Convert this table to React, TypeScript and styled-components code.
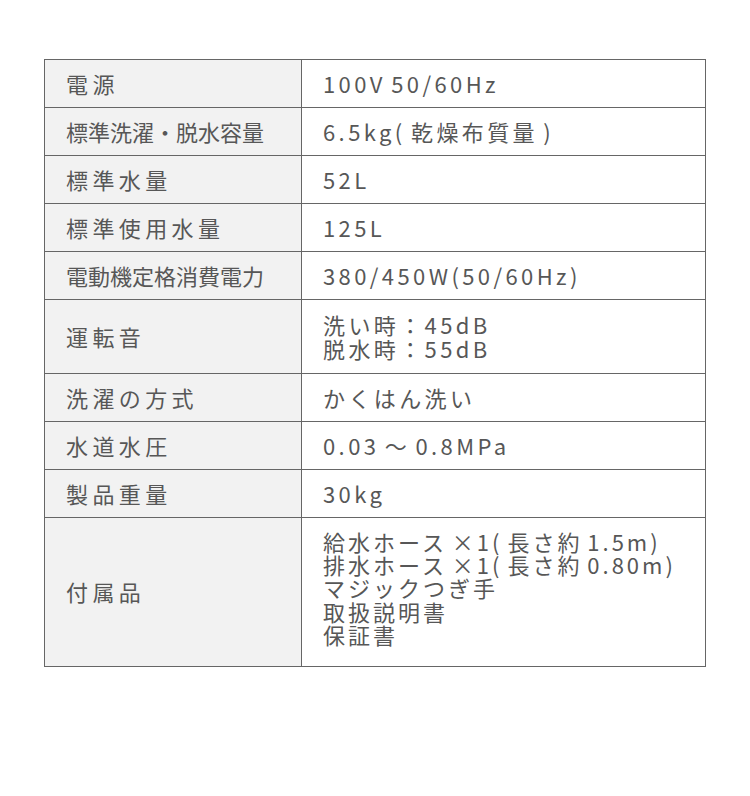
import React from "react";
import styled, { createGlobalStyle } from "styled-components";

const Global = createGlobalStyle`
  html, body { margin: 0; padding: 0; background: #fff; }
  body { font-family: "Noto Sans CJK JP", "Noto Sans", sans-serif; }
`;

const Page = styled.div`
  width: 750px;
  height: 796px;
  box-sizing: border-box;
  padding: 59px 44px 0 44px;
`;

const Table = styled.div`
  display: grid;
  grid-template-columns: 257px 1fr;
  width: 662px;
  box-sizing: border-box;
  border-top: 1px solid #666;
  border-left: 1px solid #666;
`;

const Cell = styled.div<{ $h: number }>`
  box-sizing: border-box;
  height: ${(p) => p.$h}px;
  border-right: 1px solid #666;
  border-bottom: 1px solid #666;
  display: flex;
  flex-direction: column;
  justify-content: center;
  color: #575757;
  font-size: 22px;
  font-weight: 400;
  letter-spacing: 4px;
`;

const LabelCell = styled(Cell)<{ $tight?: boolean }>`
  background: #f2f2f2;
  padding-left: 21px;
  letter-spacing: ${(p) => (p.$tight ? "0px" : "4.4px")};
`;

const ValueCell = styled(Cell)<{ $dense?: boolean }>`
  background: #fff;
  padding-left: 21px;
  padding-bottom: ${(p) => (p.$dense ? "8px" : "0")};
  letter-spacing: ${(p) => (p.$dense ? "3px" : "3.4px")};
  word-spacing: -3px;
`;

const Line = styled.div`
  line-height: 23.3px;
  white-space: nowrap;
`;

const rows: {
  label: string;
  tight?: boolean;
  dense?: boolean;
  values: string[];
  h: number;
}[] = [
  { label: "電源", values: ["100V 50/60Hz"], h: 48 },
  { label: "標準洗濯・脱水容量", tight: true, values: ["6.5kg( 乾燥布質量 )"], h: 48 },
  { label: "標準水量", values: ["52L"], h: 48 },
  { label: "標準使用水量", values: ["125L"], h: 48 },
  { label: "電動機定格消費電力", tight: true, values: ["380/450W(50/60Hz)"], h: 48 },
  { label: "運転音", values: ["洗い時：45dB", "脱水時：55dB"], h: 74 },
  { label: "洗濯の方式", values: ["かくはん洗い"], h: 48 },
  { label: "水道水圧", values: ["0.03 〜 0.8MPa"], h: 48 },
  { label: "製品重量", values: ["30kg"], h: 48 },
  {
    label: "付属品",
    dense: true,
    values: [
      "給水ホース ×1( 長さ約 1.5m)",
      "排水ホース ×1( 長さ約 0.80m)",
      "マジックつぎ手",
      "取扱説明書",
      "保証書",
    ],
    h: 149,
  },
];

export default function App() {
  return (
    <>
      <Global />
      <Page>
        <Table>
          {rows.map((r) => (
            <React.Fragment key={r.label}>
              <LabelCell $h={r.h} $tight={r.tight}>
                <Line>{r.label}</Line>
              </LabelCell>
              <ValueCell $h={r.h} $dense={r.dense}>
                {r.values.map((v) => (
                  <Line key={v}>{v}</Line>
                ))}
              </ValueCell>
            </React.Fragment>
          ))}
        </Table>
      </Page>
    </>
  );
}
